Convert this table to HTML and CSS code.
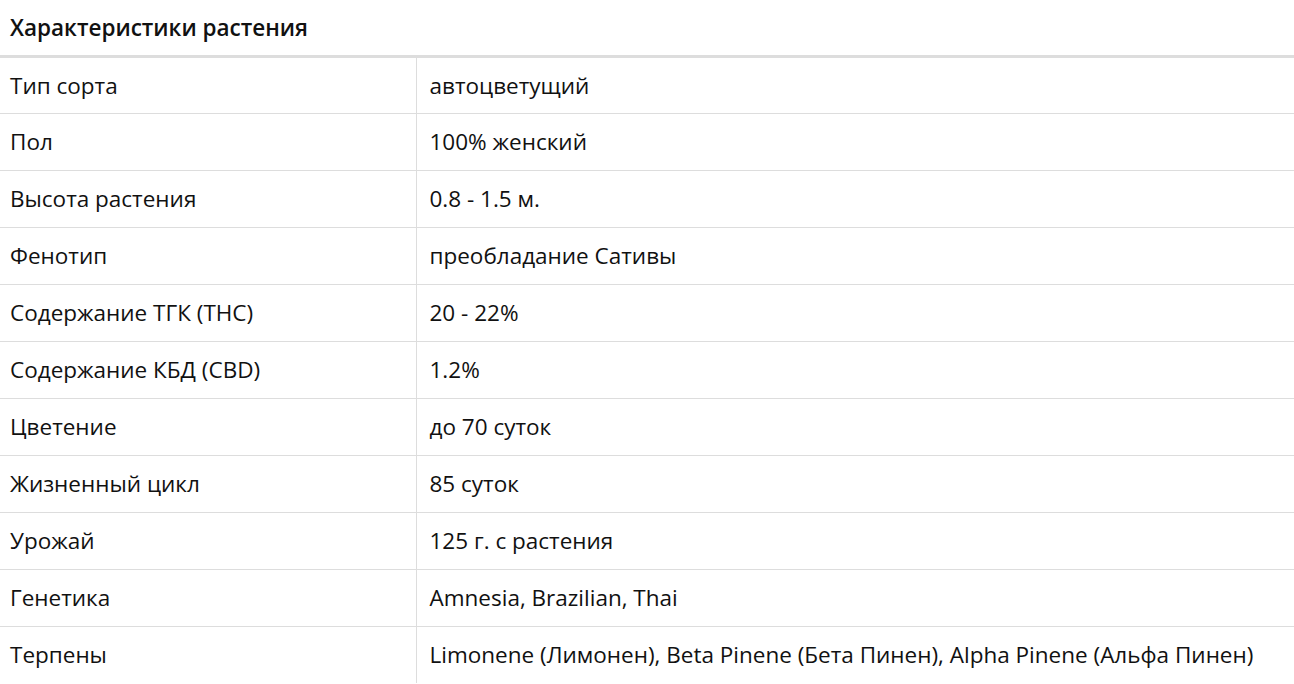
FILE: index.html
```html
<!DOCTYPE html>
<html lang="ru">
<head>
<meta charset="utf-8">
<title>Характеристики растения</title>
<link rel="stylesheet" href="styles.css">
</head>
<body>
<table class="specs">
  <thead>
    <tr><th colspan="2" class="specs-title">Характеристики растения</th></tr>
  </thead>
  <tbody>
    <tr><td class="name">Тип сорта</td><td class="value">автоцветущий</td></tr>
    <tr><td class="name">Пол</td><td class="value">100% женский</td></tr>
    <tr><td class="name">Высота растения</td><td class="value">0.8 - 1.5 м.</td></tr>
    <tr><td class="name">Фенотип</td><td class="value">преобладание Сативы</td></tr>
    <tr><td class="name">Содержание ТГК (THC)</td><td class="value">20 - 22%</td></tr>
    <tr><td class="name">Содержание КБД (CBD)</td><td class="value">1.2%</td></tr>
    <tr><td class="name">Цветение</td><td class="value">до 70 суток</td></tr>
    <tr><td class="name">Жизненный цикл</td><td class="value">85 суток</td></tr>
    <tr><td class="name">Урожай</td><td class="value">125 г. с растения</td></tr>
    <tr><td class="name">Генетика</td><td class="value">Amnesia, Brazilian, Thai</td></tr>
    <tr><td class="name">Терпены</td><td class="value">Limonene (Лимонен), Beta Pinene (Бета Пинен), Alpha Pinene (Альфа Пинен)</td></tr>
  </tbody>
</table>
</body>
</html>
```
FILE: styles.css
```css
html, body {
  margin: 0;
  padding: 0;
  background: #fff;
}
body {
  font-family: "Open Sans", "Noto Sans", sans-serif;
  color: #111;
}
.specs {
  width: 100%;
  border-collapse: collapse;
  font-size: 22.5px;
}
.specs-title {
  text-align: left;
  font-weight: 600;
  height: 56px;
  padding: 0 10px;
  box-sizing: border-box;
  border-bottom: 3px solid #ddd;
  vertical-align: middle;
}
.specs td {
  height: 57px;
  box-sizing: border-box;
  padding: 0 10px;
  border-bottom: 1px solid #ddd;
  vertical-align: middle;
}
.specs tr:last-child td {
  border-bottom: none;
}
.specs .name {
  width: 416px;
  border-right: 1px solid #ddd;
}
.specs .value {
  padding-left: 13px;
}
```
